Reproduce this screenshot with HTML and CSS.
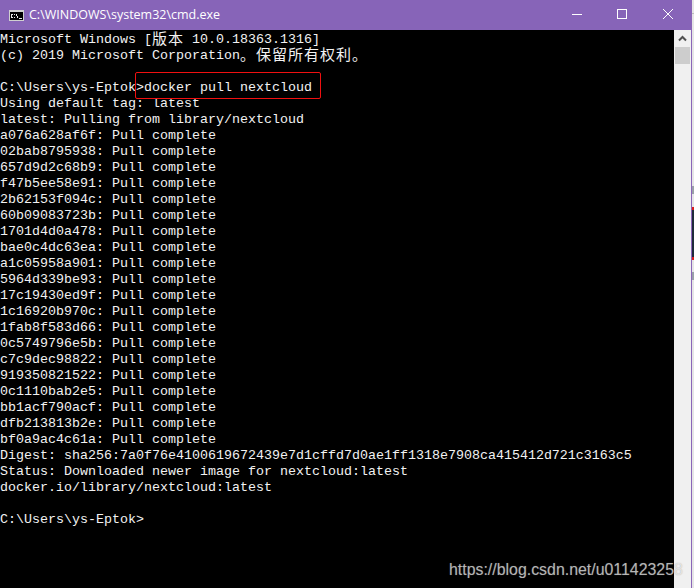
FILE: index.html
```html
<!DOCTYPE html>
<html lang="zh">
<head>
<meta charset="utf-8">
<title>cmd.exe</title>
<link rel="stylesheet" href="styles.css">
</head>
<body>
<div class="window">
  <div class="titlebar">
    <svg class="app-icon" width="15" height="11" viewBox="0 0 15 11"><rect width="15" height="11" fill="#d0d0d0"/><rect x="1" y="2" width="13" height="8" fill="#000"/><path d="M2 4h2v1H2zM2 5h1v2H2zM2 7h2v1H2zM5 4h1v1H5zM5 7h1v1H5zM7 4h1v2H7zM8 6h1v2H8zM10 8h3v1h-3z" fill="#e8e8e8"/></svg>
    <span class="title">C:\WINDOWS\system32\cmd.exe</span>
    <div class="controls">
      <svg class="ctl" width="46" height="30" viewBox="0 0 46 30"><path d="M19 14.500h10" stroke="#fff" fill="none"/></svg>
      <svg class="ctl" width="46" height="30" viewBox="0 0 46 30"><rect x="18.500" y="9.500" width="9" height="9" stroke="#fff" fill="none"/></svg>
      <svg class="ctl" width="46" height="30" viewBox="0 0 46 30"><path d="M18 9l10 10M28 9L18 19" stroke="#fff" fill="none"/></svg>
    </div>
  </div>
  <div class="body">
    <pre class="console">Microsoft Windows [<span class="cjk">版本</span> 10.0.18363.1316]
(c) 2019 Microsoft Corporation<span class="cjk">。保留所有权利。</span>

C:\Users\ys-Eptok&gt;docker pull nextcloud
Using default tag: latest
latest: Pulling from library/nextcloud
a076a628af6f: Pull complete
02bab8795938: Pull complete
657d9d2c68b9: Pull complete
f47b5ee58e91: Pull complete
2b62153f094c: Pull complete
60b09083723b: Pull complete
1701d4d0a478: Pull complete
bae0c4dc63ea: Pull complete
a1c05958a901: Pull complete
5964d339be93: Pull complete
17c19430ed9f: Pull complete
1c16920b970c: Pull complete
1fab8f583d66: Pull complete
0c5749796e5b: Pull complete
c7c9dec98822: Pull complete
919350821522: Pull complete
0c1110bab2e5: Pull complete
bb1acf790acf: Pull complete
dfb213813b2e: Pull complete
bf0a9ac4c61a: Pull complete
Digest: sha256:7a0f76e4100619672439e7d1cffd7d0ae1ff1318e7908ca415412d721c3163c5
Status: Downloaded newer image for nextcloud:latest
docker.io/library/nextcloud:latest

C:\Users\ys-Eptok&gt;</pre>
    <div class="scrollbar">
      <svg width="17" height="17" viewBox="0 0 17 17"><path d="M5 10.500l3.500-3.500 3.500 3.500" stroke="#505050" stroke-width="2" fill="none"/></svg>
      <div class="thumb"></div>
    </div>
    <div class="highlight"></div>
    <span class="watermark">https://blog.csdn.net/u011423258</span>
  </div>
</div>
<div class="sliver">
  <div class="sl-top"></div>
  <div class="sl-grey"></div>
  <div class="sl-red"></div>
  <div class="sl-navy"></div>
  <div class="sl-red"></div>
  <div class="sl-grey sl-grey-low"></div>
</div>
</body>
</html>
```
FILE: styles.css
```css
html, body { margin: 0; padding: 0; background: #ececec; }
body { width: 694px; height: 588px; overflow: hidden; display: flex; }
.window { width: 692px; height: 588px; flex: none; box-sizing: border-box; display: flex; flex-direction: column; border-right: 1px solid #8a65b8; background: #000; }
.titlebar { height: 30px; flex: none; background: #8764b8; display: flex; align-items: center; padding-left: 9px; box-sizing: border-box; }
.app-icon { flex: none; margin-top: 1px; }
.title { margin-left: 5px; color: #fff; font: 12.5px/16px "Open Sans", "Liberation Sans", Arial, sans-serif; white-space: nowrap; }
.controls { margin-left: auto; display: flex; }
.ctl { display: block; }
.body { position: relative; flex: 1; display: flex; min-height: 0; }
.console { flex: 1; margin: 0; padding-top: 2px; color: #f2f2f2; font: 13.33px/16px "Liberation Mono", "Noto Sans CJK SC", monospace; }
.cjk { display: inline-block; height: 16px; margin-top: -2px; vertical-align: top; font-size: 15px; line-height: 16px; letter-spacing: 1px; font-family: "Noto Sans CJK SC", sans-serif; }
.scrollbar { width: 17px; flex: none; background: #f0f0f0; display: flex; flex-direction: column; align-items: center; }
.thumb { width: 15px; height: 17px; background: #cdcdcd; }
.highlight { position: absolute; left: 135px; top: 42px; width: 184px; height: 25px; border: 1px solid #f01010; border-radius: 2px; }
.watermark { position: absolute; left: 449px; top: 530px; color: rgba(255, 255, 255, 0.64); font: 15.9px/20px "Liberation Sans", Arial, sans-serif; white-space: nowrap; text-shadow: 0 0 1px rgba(120, 120, 120, 0.6); }
.sliver { width: 2px; flex: none; display: flex; flex-direction: column; background: #e6e6e6; }
.sl-top { height: 13px; margin-bottom: 172px; border-bottom: 1px solid #bdbdbd; }
.sl-grey { height: 8px; margin-bottom: 13px; background: #9aa0a8; }
.sl-red { height: 3px; background: #d81e1e; }
.sl-navy { height: 47px; margin: 0; background: #1e2a3a; }
.sl-grey-low { margin-top: 12px; margin-bottom: 0; }
```
